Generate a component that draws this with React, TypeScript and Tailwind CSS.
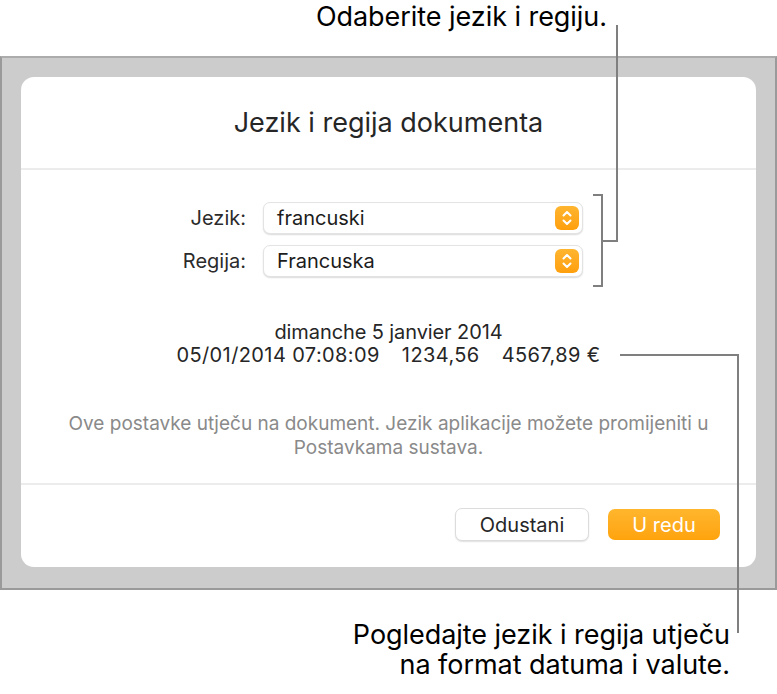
import React from "react";

function Stepper() {
  return (
    <span className="flex h-[24px] w-[24px] items-center justify-center rounded-[6px] bg-gradient-to-b from-[#ffb52e] to-[#ff9f0a]">
      <svg viewBox="0 0 24 24" className="h-[24px] w-[24px]" fill="none">
        <path d="M8.5 9.5 12 6l3.5 3.5" stroke="white" strokeWidth="2" strokeLinecap="round" strokeLinejoin="round" />
        <path d="M8.5 14.5 12 18l3.5-3.5" stroke="white" strokeWidth="2" strokeLinecap="round" strokeLinejoin="round" />
      </svg>
    </span>
  );
}

function PopUp({ value }: { value: string }) {
  return (
    <div className="flex h-[32px] w-[320px] items-center justify-between rounded-[7px] border border-[#e3e3e3] bg-white pl-[13px] pr-[3px] shadow-[0_1px_1.5px_rgba(0,0,0,0.14)]">
      <span className="text-[20px] leading-[24px] text-[#1c1c1c]">{value}</span>
      <Stepper />
    </div>
  );
}

export default function App() {
  return (
    <div className="relative h-[694px] w-[777px] overflow-hidden bg-white font-['Inter',sans-serif] text-black">
      {/* top callout */}
      <div className="flex h-[56px] justify-end pr-[170px]">
        <p className="text-[27px] leading-[33px] tracking-[-0.05px]">Odaberite jezik i regiju.</p>
      </div>

      {/* window backdrop */}
      <div className="h-[534px] border-2 border-t-[#acacac] border-l-[#9a9a9a] border-r-[#9a9a9a] border-b-[#9a9a9a] bg-[#cccccc] px-[19px] pt-[19px]">
        <div className="flex h-[490px] flex-col rounded-[13px] bg-white">
          <div className="h-[93px] border-b-2 border-[#ececec] pt-[29px] text-center">
            <h1 className="text-[27px] leading-[34px] text-[#262626]">Jezik i regija dokumenta</h1>
          </div>

          <div className="flex flex-1 flex-col pt-[32px]">
            <div className="ml-[145px] grid grid-cols-[80px_320px] items-center gap-x-[17px] gap-y-[11px]">
              <span className="text-right text-[20px] leading-[24px] text-[#2b2b2b]">Jezik:</span>
              <PopUp value="francuski" />
              <span className="text-right text-[20px] leading-[24px] text-[#2b2b2b]">Regija:</span>
              <PopUp value="Francuska" />
            </div>

            <div className="mt-[44px] text-center text-[20px] leading-[23px] text-[#262626]">
              <p className="tracking-[-0.1px]">dimanche 5 janvier 2014</p>
              <p className="flex justify-center gap-[22px] tracking-[0.4px]">
                <span>05/01/2014 07:08:09</span>
                <span>1234,56</span>
                <span>4567,89 €</span>
              </p>
            </div>

            <p className="mt-[45px] text-center text-[19px] leading-[24px] text-[#8a8a8a]">
              Ove postavke utječu na dokument. Jezik aplikacije možete promijeniti u
              <br />
              Postavkama sustava.
            </p>
          </div>

          <div className="flex h-[84px] items-center justify-end gap-[19px] border-t-2 border-[#ececec] pb-[3px] pr-[36px]">
            <button className="h-[33px] w-[134px] rounded-[7px] border border-[#dcdcdc] bg-white text-[20px] leading-[24px] text-[#262626] shadow-[0_1px_1.5px_rgba(0,0,0,0.12)]">
              Odustani
            </button>
            <button className="h-[31px] w-[112px] rounded-[7px] bg-gradient-to-b from-[#ffb62c] to-[#ffa30a] text-[20px] leading-[24px] text-white">
              U redu
            </button>
          </div>
        </div>
      </div>

      {/* bottom callout */}
      <div className="flex justify-end pr-[47px] pt-[30px]">
        <p className="text-right text-[27px] leading-[30px] tracking-[-0.05px]">
          Pogledajte jezik i regija utječu
          <br />
          na format datuma i valute.
        </p>
      </div>

      {/* callout lines */}
      <svg className="pointer-events-none absolute inset-0" width="777" height="694" fill="none">
        <path d="M617 25V241H602" stroke="#7f7f7f" strokeWidth="2" />
        <path d="M593 195H602V286H593" stroke="#7f7f7f" strokeWidth="2" />
        <path d="M620 355H738V633" stroke="#7f7f7f" strokeWidth="2" />
      </svg>
    </div>
  );
}
